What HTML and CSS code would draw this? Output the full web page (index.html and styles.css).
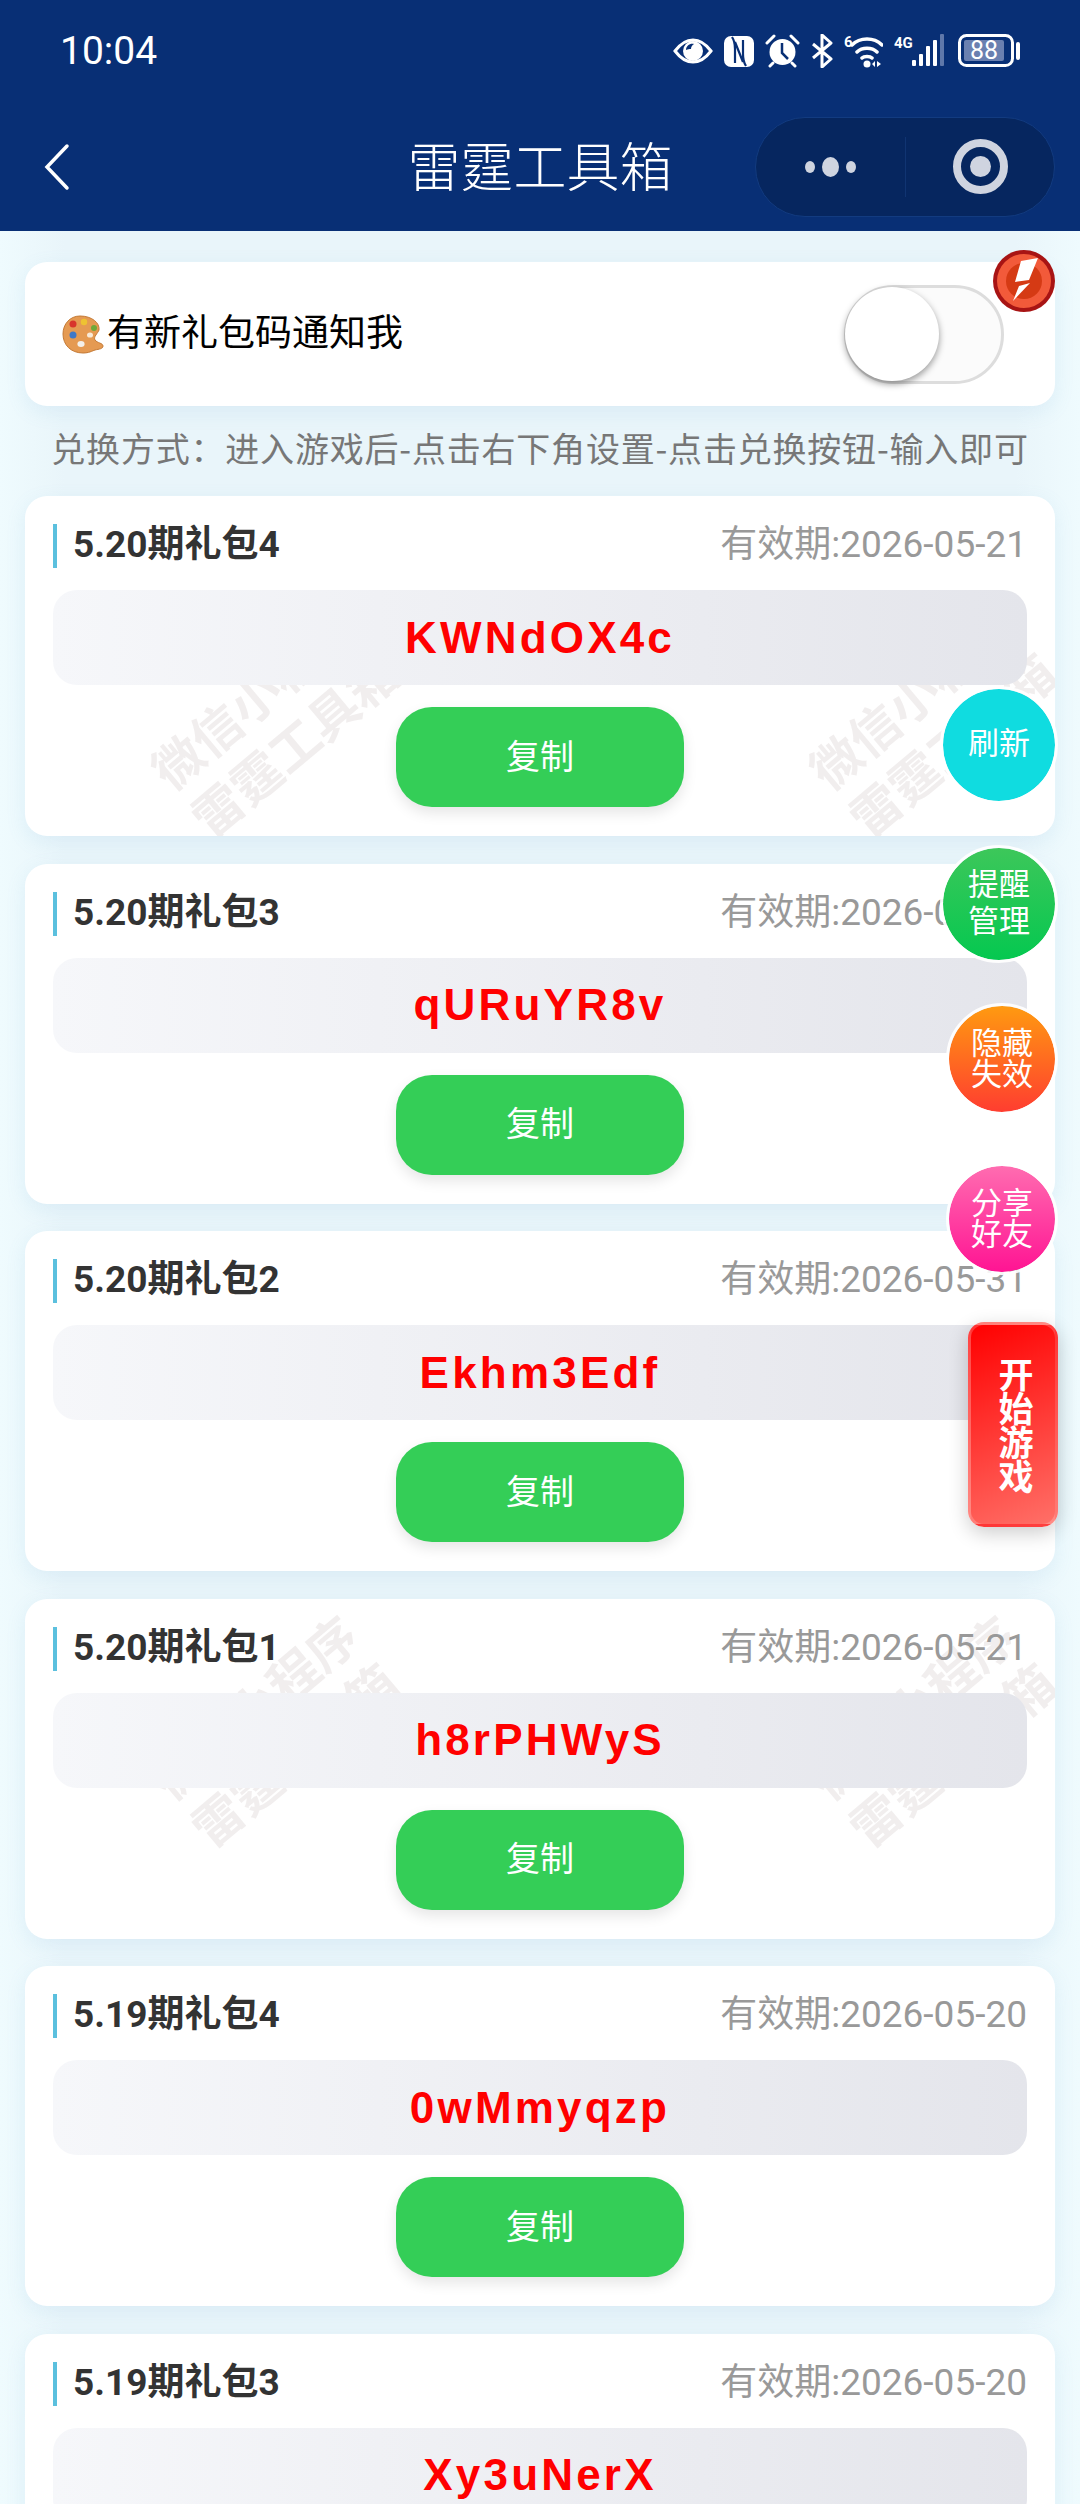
FILE: index.html
```html
<!DOCTYPE html>
<html lang="zh-CN">
<head>
    <meta charset="UTF-8">
    <title>雷霆工具箱</title>
    <link rel="stylesheet" href="styles.css">
</head>
<body>
    <header class="top">
        <!-- system status bar -->
        <div class="status">
            <span class="time">10:04</span>
            <div class="status-icons">
                <svg width="40" height="34" viewBox="0 0 40 34"><path d="M2 17C8 9 14 6 20 6s12 3 18 11c-6 8-12 11-18 11S8 25 2 17z" fill="none" stroke="#fff" stroke-width="3"/><circle cx="20" cy="17" r="10" fill="#fff"/><path d="M13 16c0-4 4-7 8-6-2 1-3 3-3 5-2 0-3 0-5 1z" fill="#082f75"/></svg>
                <svg width="30" height="34" viewBox="0 0 30 34"><rect y="2" width="30" height="31" rx="7" fill="#fff"/><path d="M8 3c2 3 3 7 3 12v14M22 32c-2-3-3-7-3-12V6M11 8l8 20" fill="none" stroke="#082f75" stroke-width="2.2"/></svg>
                <svg width="35" height="34" viewBox="0 0 35 34"><circle cx="17.5" cy="18" r="13" fill="#fff"/><path d="M17 9v10l6 6" fill="none" stroke="#082f75" stroke-width="2.5"/><path d="M2 9l7-7M33 9l-7-7M5 32l3-3M30 32l-3-3" stroke="#fff" stroke-width="3" stroke-linecap="round"/></svg>
                <svg width="22" height="34" viewBox="0 0 22 34"><path d="M2 10l18 15-9 8V1l9 8L2 24" fill="none" stroke="#fff" stroke-width="3" stroke-linejoin="round"/></svg>
                <svg width="39" height="34" viewBox="0 0 39 34"><text x="0" y="13" class="tiny">6</text><path d="M8 11c8-8 22-8 30 0M13 18c5-5 15-5 20 0M18 24c2-2 8-2 10 0" fill="none" stroke="#fff" stroke-width="3.5" stroke-linecap="round"/><circle cx="23" cy="30" r="3.5" fill="#fff"/><path d="M31 27v6l-3-3zM33 27v6l4-3z" fill="#fff"/></svg>
                <svg width="51" height="34" viewBox="0 0 51 34"><text x="0" y="14" class="tiny">4G</text><rect x="18" y="26" width="4" height="6" rx="1" fill="#fff"/><rect x="25" y="20" width="4" height="12" rx="1" fill="#fff"/><rect x="32" y="12" width="4" height="20" rx="1" fill="#fff"/><rect x="39" y="6" width="4" height="26" rx="1" fill="#fff"/><rect x="46" y="0" width="4" height="32" rx="1" fill="#5f78aa"/></svg>
                <svg class="battery" width="62" height="34" viewBox="0 0 62 34"><rect x="1.5" y="1.5" width="53" height="30" rx="7" fill="none" stroke="#fff" stroke-width="3"/><rect x="6" y="6" width="40" height="21" rx="2" fill="#6a80b0"/><text x="26" y="25" class="batt-num">88</text><rect x="58" y="8" width="4" height="18" rx="2" fill="#fff"/></svg>
            </div>
        </div>
        <!-- mini program nav bar -->
        <div class="nav">
            <svg class="back" width="28" height="48" viewBox="0 0 28 48"><path d="M24 3L4 24l20 21" fill="none" stroke="#fff" stroke-width="3.5" stroke-linecap="round"/></svg>
            <h1 class="nav-title">雷霆工具箱</h1>
            <div class="capsule">
                <div class="capsule-side">
                    <i class="dot"></i><i class="dot dot-big"></i><i class="dot"></i>
                </div>
                <div class="capsule-side capsule-right">
                    <i class="ring"></i>
                </div>
            </div>
        </div>
    </header>

    <main class="list">
        <div class="notice">
            <div class="notice-label">
                <svg width="42" height="39" viewBox="0 0 42 39"><path d="M18 1C8 1 1 9 1 19c0 11 8 19 20 19 6 0 9-2 12-3 4-1 8-1 8-4 0-3-6-3-8-6-2-3 3-7 4-10C38 8 30 1 18 1z" fill="#e59a52" stroke="#c47a36"/><circle cx="11" cy="9" r="3.5" fill="#d8342c"/><circle cx="22" cy="7" r="3.2" fill="#eec232"/><circle cx="32" cy="13" r="3" fill="#6fa83a"/><circle cx="11" cy="20" r="3.5" fill="#3f78c8"/><ellipse cx="28" cy="20" rx="3" ry="2.6" fill="#f8ead8"/><ellipse cx="19" cy="29" rx="3.6" ry="3" fill="#f4f0ea"/></svg>
                <span class="notice-text">有新礼包码通知我</span>
            </div>
            <div class="toggle"><i class="thumb"></i></div>
        </div>
        <svg class="flash" width="62" height="62" viewBox="0 0 62 62"><circle cx="31" cy="31" r="31" fill="#a81414"/><circle cx="31" cy="31" r="27" fill="#f25a3a"/><circle cx="31" cy="31" r="18" fill="#d53a14"/><path d="M28 11l17-3-9 22-14 2z" fill="#fff"/><path d="M26 36l11-3-17 18z" fill="#fff"/></svg>

        <p class="hint">兑换方式：进入游戏后-点击右下角设置-点击兑换按钮-输入即可</p>

        <div class="card">
            <span class="wm wm-left">微信小程序<br>雷霆工具箱</span>
            <span class="wm wm-right">微信小程序<br>雷霆工具箱</span>
            <div class="card-head"><span class="card-title">5.20期礼包4</span><span class="card-date">有效期:2026-05-21</span></div>
            <div class="code">KWNdOX4c</div>
            <button class="copy">复制</button>
        </div>
        <div class="card">
            <div class="card-head"><span class="card-title">5.20期礼包3</span><span class="card-date">有效期:2026-05-31</span></div>
            <div class="code">qURuYR8v</div>
            <button class="copy">复制</button>
        </div>
        <div class="card">
            <div class="card-head"><span class="card-title">5.20期礼包2</span><span class="card-date">有效期:2026-05-31</span></div>
            <div class="code">Ekhm3Edf</div>
            <button class="copy">复制</button>
        </div>
        <div class="card">
            <span class="wm wm-left wm-high">微信小程序<br>雷霆工具箱</span>
            <span class="wm wm-right wm-high">微信小程序<br>雷霆工具箱</span>
            <div class="card-head"><span class="card-title">5.20期礼包1</span><span class="card-date">有效期:2026-05-21</span></div>
            <div class="code">h8rPHWyS</div>
            <button class="copy">复制</button>
        </div>
        <div class="card">
            <div class="card-head"><span class="card-title">5.19期礼包4</span><span class="card-date">有效期:2026-05-20</span></div>
            <div class="code">0wMmyqzp</div>
            <button class="copy">复制</button>
        </div>
        <div class="card">
            <div class="card-head"><span class="card-title">5.19期礼包3</span><span class="card-date">有效期:2026-05-20</span></div>
            <div class="code">Xy3uNerX</div>
            <button class="copy">复制</button>
        </div>
    </main>

    <!-- floating buttons -->
    <div class="fab fab-refresh">刷新</div>
    <div class="fab fab-remind">提醒<br>管理</div>
    <div class="fab fab-small fab-hide">隐藏<br>失效</div>
    <div class="fab fab-small fab-share">分享<br>好友</div>
    <div class="start-game">开始游戏</div>
</body>
</html>
```

FILE: styles.css
```css
* { box-sizing: border-box; }
body { margin: 0; height: 2504px; overflow: hidden; position: relative; font-family: Roboto, "Noto Sans CJK SC", sans-serif; background: linear-gradient(90deg, #effbfe, #e9f5fa 6%, #e9f5fa 94%, #effbfe); }

.top { height: 231px; background: #082f75; color: #fff; }
.status { height: 102px; padding: 0 60px; display: flex; align-items: center; justify-content: space-between; }
.time { font-size: 39px; }
.status-icons { display: flex; align-items: center; gap: 11px; }
.status-icons svg { display: block; }
.battery { margin-left: 2px; }
.tiny { font: bold 15px Roboto, sans-serif; fill: #fff; }
.batt-num { font: 25px Roboto, sans-serif; fill: #fff; text-anchor: middle; }

.nav { height: 129px; padding: 0 25px 0 43px; display: flex; align-items: center; position: relative; }
.nav-title { position: absolute; left: 0; right: 0; margin: 5px 0 0; text-align: center; font-size: 53px; font-weight: 300; line-height: 1; }
.capsule { margin-left: auto; width: 300px; height: 100px; border-radius: 50px; background: #06265f; border: 1px solid #123b80; display: flex; align-items: center; }
.capsule-side { width: 150px; height: 60px; display: flex; align-items: center; justify-content: center; gap: 7px; }
.capsule-right { border-left: 1px solid #103472; }
.dot { width: 10px; height: 12px; border-radius: 50%; background: #cfd4e0; }
.dot-big { width: 17px; height: 20px; }
.ring { width: 55px; height: 55px; border-radius: 50%; border: 8px solid #cfd4e0; display: flex; align-items: center; justify-content: center; }
.ring::before { content: ""; width: 21px; height: 21px; border-radius: 50%; background: #cfd4e0; }

.list { padding: 31px 25px 0; position: relative; }
.notice { height: 144px; padding: 0 51px 0 37px; background: #fff; border-radius: 22px; display: flex; align-items: center; justify-content: space-between; box-shadow: 0 6px 20px rgba(110, 170, 210, .12); }
.notice-label { display: flex; align-items: center; font-size: 37px; color: #000; gap: 3px; }
.notice-text { padding-bottom: 8px; }
.toggle { width: 160px; height: 99px; border: 3px solid #ddd; border-radius: 50px; background: #fbfbfb; display: flex; align-items: center; }
.thumb { width: 94px; height: 94px; border-radius: 50%; background: #fff; box-shadow: 0 3px 7px rgba(0, 0, 0, .4); margin-left: -2px; }
.flash { position: absolute; top: 19px; right: 25px; }
.hint { height: 90px; margin: 0; padding-bottom: 8px; display: flex; align-items: center; justify-content: center; font-family: "Noto Sans CJK SC", sans-serif; font-size: 34px; letter-spacing: .8px; color: #777; white-space: nowrap; }

.card { height: 340px; margin-bottom: 27.5px; padding: 28px; background: #fff; border-radius: 22px; position: relative; overflow: hidden; box-shadow: 0 6px 20px rgba(110, 170, 210, .12); }
.card-head { height: 44px; display: flex; align-items: center; justify-content: space-between; position: relative; }
.card-title { height: 44px; line-height: 42px; padding-left: 16px; border-left: 4px solid #5bc0de; font-size: 37px; font-weight: bold; color: #333; }
.card-date { padding-bottom: 10px; font-size: 37px; color: #999; }
.code { height: 95px; margin-top: 22px; border-radius: 24px; background: linear-gradient(90deg, #f6f7fa, #e4e5eb); color: #f00; font: bold 44px "Liberation Sans", sans-serif; letter-spacing: 3.2px; display: flex; align-items: center; justify-content: center; position: relative; }
.copy { display: block; width: 288px; height: 100px; margin: 22px auto 0; padding: 0 0 6px; border: none; border-radius: 36px; background: #34ce57; color: #fff; font-family: inherit; font-size: 34px; box-shadow: 0 6px 14px rgba(0, 0, 0, .1); position: relative; }

.wm { position: absolute; width: 340px; margin: -62px 0 0 -170px; font-size: 50px; font-weight: bold; line-height: 62px; text-align: center; color: rgba(170, 150, 150, .16); transform: rotate(-40deg); white-space: nowrap; }
.wm-left { left: 251px; top: 227px; }
.wm-right { left: 909px; top: 227px; }
.wm-high { top: 134px; }

.fab { position: absolute; right: 25px; width: 112px; height: 112px; border-radius: 50%; outline: 3px solid rgba(255, 255, 255, .9); color: #fff; font-size: 31px; line-height: 37px; display: flex; align-items: center; justify-content: center; text-align: center; }
.fab-small { width: 106px; height: 106px; line-height: 31px; }
.fab-refresh { top: 689px; padding-bottom: 4px; background: #10dce0; }
.fab-remind { top: 848px; padding-bottom: 2px; background: linear-gradient(#3dc75a, #05c850); }
.fab-hide { top: 1006px; background: linear-gradient(#ff9a10, #ff3d30); }
.fab-share { top: 1166px; background: linear-gradient(#ff6cb0, #ff1493); }
.start-game { position: absolute; top: 1322px; right: 22px; width: 90px; height: 205px; padding-right: 2px; border-radius: 16px; border: 3px solid rgba(255, 255, 255, .2); background: linear-gradient(155deg, #f00, #ff7068); color: #fff; font-size: 35px; font-weight: bold; line-height: 1; letter-spacing: -1px; writing-mode: vertical-rl; display: flex; align-items: center; justify-content: center; box-shadow: 0 6px 20px rgba(0, 0, 0, .2); }
```
